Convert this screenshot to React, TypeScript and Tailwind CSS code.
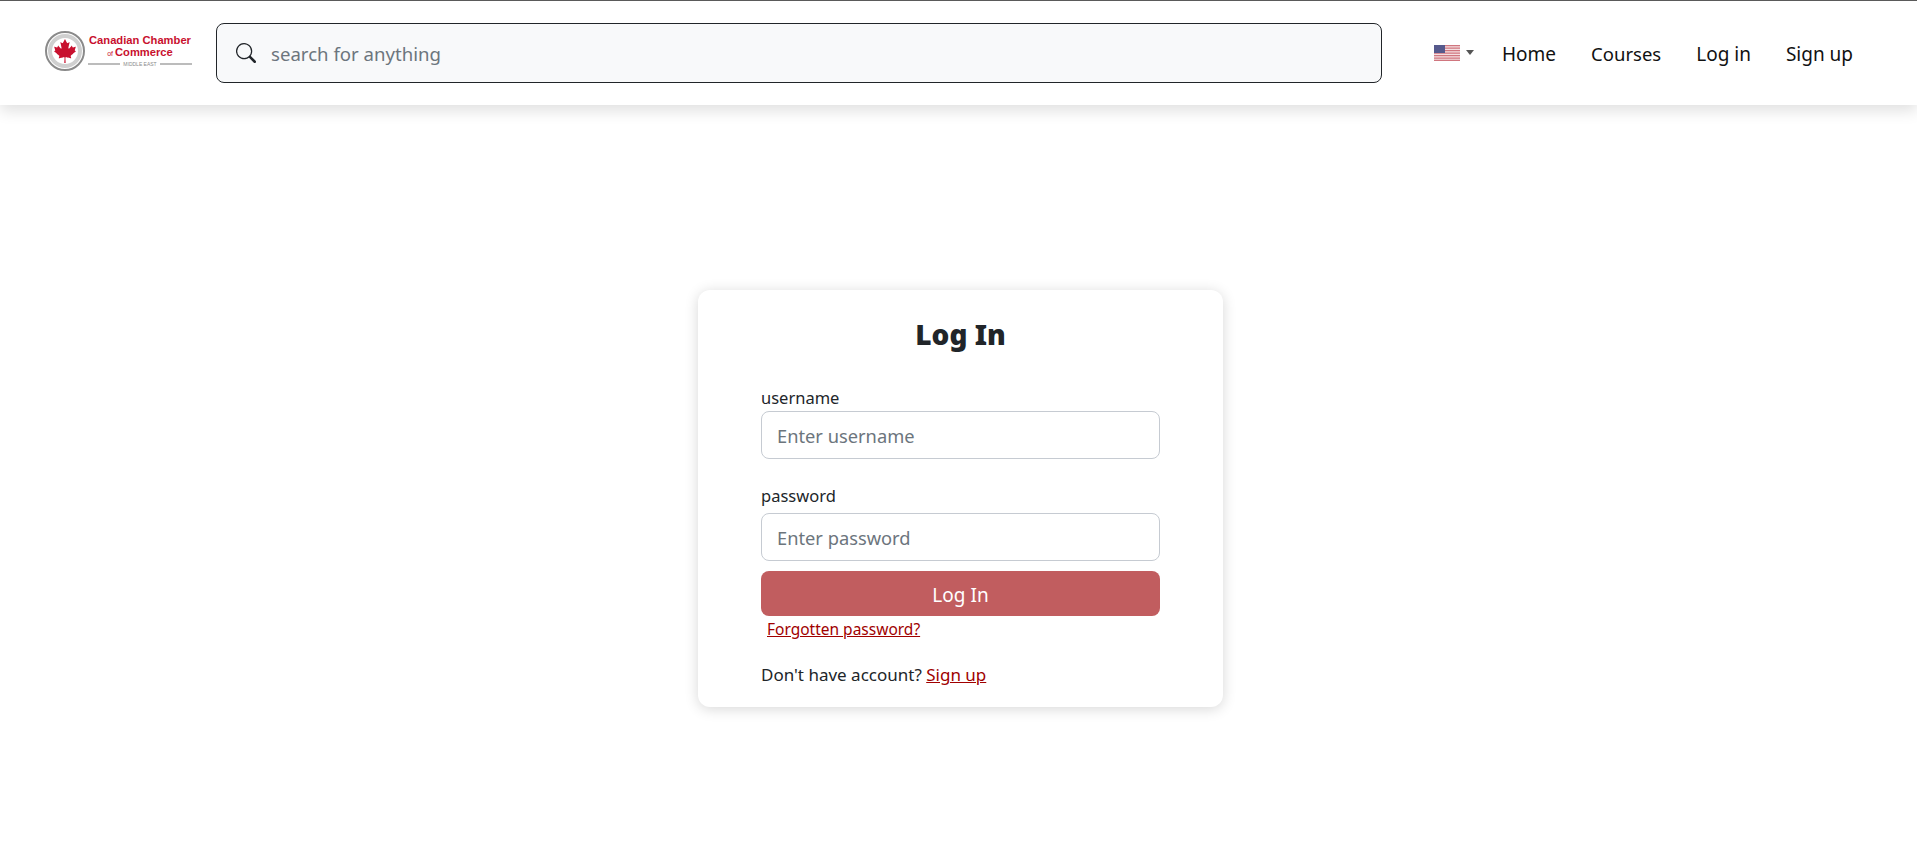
import { BsSearch } from "react-icons/bs";
import { FaCanadianMapleLeaf } from "react-icons/fa";

function Logo() {
  return (
    <div className="flex items-center gap-[3px] w-[148px] shrink-0 -mt-[5px]">
      <div className="relative w-[40px] h-[40px] rounded-full border-[2px] border-[#8a8a8a] bg-white flex items-center justify-center shrink-0">
        <div className="absolute inset-[1px] rounded-full border-[4px] border-[#cfcfcf]" />
        <FaCanadianMapleLeaf className="relative text-[#c8102e] w-[24px] h-[24px]" />
      </div>
      <div className="flex flex-col items-center w-[104px] font-['Liberation_Sans',sans-serif] text-[#c8102e] leading-[12px]">
        <span className="text-[11.2px] font-bold whitespace-nowrap">Canadian Chamber</span>
        <span className="text-[11.2px] font-bold whitespace-nowrap"><span className="text-[7px] font-normal">of </span>Commerce</span>
        <div className="flex items-center w-full gap-[3px] mt-[1px]">
          <div className="h-[2px] flex-1 bg-[#bcbcbc]" />
          <span className="text-[5px] leading-[6px] font-normal text-[#8a8a8a] whitespace-nowrap">MIDDLE EAST</span>
          <div className="h-[2px] flex-1 bg-[#bcbcbc]" />
        </div>
      </div>
    </div>
  );
}

function Flag() {
  return (
    <svg width="26" height="16" viewBox="0 0 26 16" className="block">
      <rect width="26" height="16" fill="#f4dfe1" />
      {[0, 2.5, 5, 7.5, 10, 12.5].map((y) => (
        <rect key={y} y={y} width="26" height="1.25" fill="#d0767f" />
      ))}
      <rect y="14.75" width="26" height="1.25" fill="#d0767f" />
      <rect width="11" height="8" fill="#56598c" />
    </svg>
  );
}

function Field({ label, placeholder, className, labelClassName }: { label: string; placeholder: string; className: string; labelClassName: string }) {
  return (
    <div className={className}>
      <label className={`block text-[16.5px] text-[#212529] ${labelClassName}`}>{label}</label>
      <input
        placeholder={placeholder}
        className="block w-full h-[48px] px-[15px] rounded-[8px] border border-[#c6cbd2] bg-white text-[18.3px] text-[#212529] placeholder:text-[#6c757d] outline-none"
      />
    </div>
  );
}

export default function App() {
  return (
    <div className="min-h-[847px] bg-white font-['Noto_Sans',sans-serif] text-[#212529]">
      <header className="h-[105px] border-t border-[#5a5a5a] bg-white shadow-[0_6px_14px_rgba(0,0,0,0.12)] flex items-center pl-[45px] pr-[45px]">
        <Logo />
        <div className="ml-[23px] w-[1166px] h-[60px] shrink-0 rounded-[8px] border border-[#212529] bg-[#f8f9fa] flex items-center pl-[19px]">
          <BsSearch className="w-[20px] h-[20px] text-[#212529] shrink-0" />
          <input
            placeholder="search for anything"
            className="ml-[15px] mt-[1px] flex-1 bg-transparent text-[18.6px] outline-none placeholder:text-[#6c757d]"
          />
        </div>
        <nav className="ml-[52px] flex items-center text-[19px] text-[#111]">
          <div className="flex items-center gap-[6px]">
            <Flag />
            <div className="w-0 h-0 border-x-[4px] border-x-transparent border-t-[5px] border-t-[#555] -mt-[2px]" />
          </div>
          <a className="ml-[28px] mt-[2px]">Home</a>
          <a className="ml-[35px] mt-[1px] text-[18.5px]">Courses</a>
          <a className="ml-[35px] mt-[2px]">Log in</a>
          <a className="ml-[35px] mt-[2px]">Sign up</a>
        </nav>
      </header>
      <main className="flex justify-center pl-[4px] pt-[185px]">
        <div className="w-[525px] h-[417px] rounded-[12px] bg-white shadow-[0_2px_14px_rgba(0,0,0,0.16)] px-[63px] pt-[25px]">
          <h1 className="text-center text-[28px] leading-[38px] font-black text-[#212529]">Log In</h1>
          <Field label="username" placeholder="Enter username" className="mt-[33px]" labelClassName="leading-[23px] mb-[2px]" />
          <Field label="password" placeholder="Enter password" className="mt-[23px]" labelClassName="leading-[28px] mb-[3px]" />
          <button className="mt-[10px] block w-full h-[45px] pt-[3px] rounded-[8px] bg-[#c15d5f] text-white text-[19px]">Log In</button>
          <a className="block mt-[3px] ml-[6px] text-[15.5px] leading-[21px] text-[#a00000] underline">Forgotten password?</a>
          <p className="mt-[23px] text-[17px] leading-[24px] text-[#212529]">
            Don't have account? <a className="text-[#a00000] underline">Sign up</a>
          </p>
        </div>
      </main>
    </div>
  );
}
